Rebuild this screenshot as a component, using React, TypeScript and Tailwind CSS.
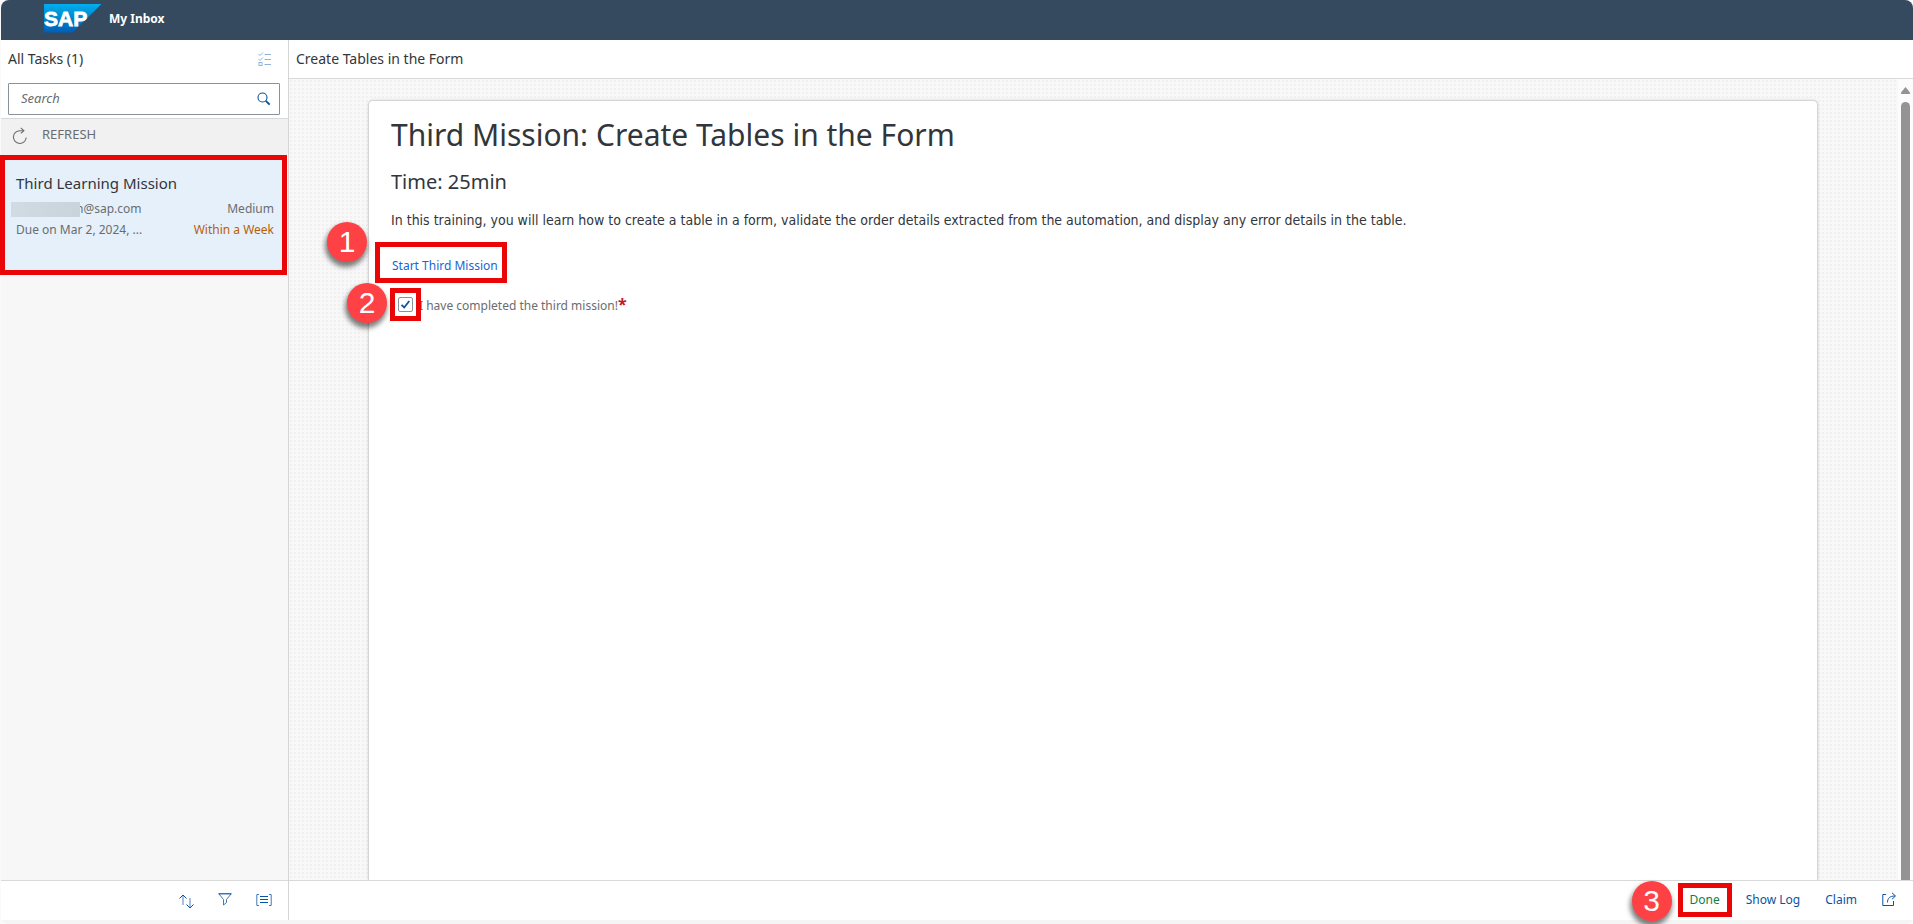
import type { ReactNode } from 'react';

function Callout({ className, children }: { className: string; children: ReactNode }) {
  return (
    <span
      aria-hidden="true"
      className={`pointer-events-none absolute z-20 flex size-10 items-center justify-center rounded-full bg-[#fd4144] font-['Liberation_Sans',sans-serif] text-[30px] leading-none text-white shadow-[-1px_4px_5px_1px_rgba(0,0,0,0.5)] ${className}`}
    >
      {children}
    </span>
  );
}

function Frame() {
  return <span className="pointer-events-none absolute inset-0 z-10 border-5 border-[#ea0606]" />;
}

function SapLogo() {
  return (
    <svg width="58" height="29" viewBox="0 0 58 29" role="img" aria-label="SAP">
      <defs>
        <linearGradient id="sap" x1="0" y1="0" x2="0" y2="1">
          <stop offset="0" stopColor="#00aeef" />
          <stop offset="0.5" stopColor="#0085ca" />
          <stop offset="1" stopColor="#005eb8" />
        </linearGradient>
      </defs>
      <path d="M0 0H57.500L28.500 28.500H0Z" fill="url(#sap)" />
      <text
        x="0"
        y="22"
        fill="#fff"
        stroke="#fff"
        strokeWidth="0.8"
        fontFamily="'Liberation Sans', sans-serif"
        fontWeight="700"
        fontSize="21"
      >
        SAP
      </text>
    </svg>
  );
}

function MultiSelectIcon() {
  return (
    <svg width="14" height="15" viewBox="0 0 14 15" fill="none" stroke="#8fb3da">
      <path d="M6.500 2.500H13M6.500 7.500H13M6.500 12.500H13M0.500 2L2 3.500L5 0.500M0.500 7L2 8.500L5 5.500" />
      <rect x="1" y="10.500" width="3" height="3" />
    </svg>
  );
}

function SearchIcon() {
  return (
    <svg width="14" height="14" viewBox="0 0 14 14" fill="none" stroke="#0854a0">
      <circle cx="5.500" cy="5.500" r="4.500" strokeWidth="1.100" />
      <path d="M8.800 8.800L12.700 12.700" strokeWidth="1.900" />
    </svg>
  );
}

function RefreshIcon() {
  return (
    <svg width="16" height="18" viewBox="0 0 16 18" fill="none" stroke="#6a6d70" strokeWidth="1.100">
      <path d="M11.800 3.700H8A6.400 6.400 0 1 0 14.200 10.500" />
      <path d="M8.800 0.800L11.900 3.700L8.800 6.400" />
    </svg>
  );
}

function SortIcon() {
  return (
    <svg width="15" height="15" viewBox="0 0 15 15" fill="none" stroke="#0854a0">
      <path d="M4 1V11M11 4V14" stroke="#6d9aca" strokeWidth="1.200" />
      <path d="M0.500 4.500L4 1L7.500 4.500M7.500 10.500L11 14L14.500 10.500" />
    </svg>
  );
}

function FilterIcon() {
  return (
    <svg width="14" height="13" viewBox="0 0 14 13" fill="none" stroke="#0854a0">
      <path d="M1 1L5.500 6.500V12L8.500 9.500V6.500L13 1" stroke="#3f79b6" />
      <path d="M0.500 0.800H13.500" strokeWidth="1.200" />
    </svg>
  );
}

function GroupIcon() {
  return (
    <svg width="16" height="12" viewBox="0 0 16 12" fill="none" stroke="#0854a0">
      <path d="M3 0.500H0.800V11.500H3M13 0.500H15.200V11.500H13" stroke="#3f79b6" />
      <path d="M4 2.500H12M4 5.500H12M4 8.500H12" strokeWidth="1.200" />
    </svg>
  );
}

function ShareIcon() {
  return (
    <svg width="15" height="15" viewBox="0 0 15 15" fill="none" stroke="#0854a0">
      <path d="M4 2.500H0.800V13.500H11.500V9" />
      <path d="M5.500 10.500C5.500 6 8 4 13 4" />
      <path d="M10 0.800L13.500 4L10 7.200" />
    </svg>
  );
}

function Sidebar() {
  return (
    <aside className="flex w-72 shrink-0 flex-col border-r border-[#d5d5d5] bg-[#f7f7f7]">
      <div className="border-b border-[#d9d9d9] bg-white pr-2 pb-[3px] pl-[7px]">
        <div className="flex h-[38px] items-center justify-between pr-2">
          <h2 className="text-[14px] leading-5 text-[#32363a]">All Tasks (1)</h2>
          <button type="button" aria-label="Select multiple tasks">
            <MultiSelectIcon />
          </button>
        </div>
        <form className="mt-[5px] flex h-8 items-center rounded-[1px] border border-[#89919a] bg-white pr-2 pl-3" onSubmit={(e) => e.preventDefault()}>
          <input
            type="search"
            aria-label="Search"
            placeholder="Search"
            className="min-w-0 flex-1 pb-0.5 text-[13px] leading-5 outline-none placeholder:text-[#6a6d70] placeholder:italic"
          />
          <button type="submit" aria-label="Run search">
            <SearchIcon />
          </button>
        </form>
      </div>
      <button type="button" className="flex h-9 items-center gap-3.5 bg-[#f1f1f1] pb-1.5 pl-[11px] text-[13px] leading-5 text-[#6a6d70]">
        <span className="pt-1"><RefreshIcon /></span>
        REFRESH
      </button>
      <a href="#task" className="relative -ml-px mr-px block h-[120px] bg-[#e5f0fa] pt-[18px] pr-[13px] pl-4 text-[12px] leading-4 text-[#6a6d70]">
        <Frame />
        <h3 className="text-[15px] leading-5 text-[#32363a]">Third Learning Mission</h3>
        <div className="mt-2 flex justify-between">
          <span className="-ml-[5px] flex items-center">
            <span className="z-1 -mr-1 h-[15px] w-[69px] bg-linear-to-r from-[#d0dbe4] to-[#c9d3dc]" />
            n@sap.com
          </span>
          <span>Medium</span>
        </div>
        <div className="mt-[5px] flex justify-between">
          <span>Due on Mar 2, 2024, ...</span>
          <span className="text-[#b95e04]">Within a Week</span>
        </div>
      </a>
      <div className="mt-auto flex h-10 items-center justify-end gap-6 border-t border-[#d9d9d9] bg-white pr-4 pb-0.5">
        <button type="button" aria-label="Sort" className="pt-1"><SortIcon /></button>
        <button type="button" aria-label="Filter"><FilterIcon /></button>
        <button type="button" aria-label="Group"><GroupIcon /></button>
      </div>
    </aside>
  );
}

function MissionForm() {
  return (
    <article className="flex-1 rounded-t-[5px] border border-b-0 border-[#d5d5d5] bg-white px-[22px] pt-3.5 text-[#32363a] shadow-[0_0_3px_rgba(0,0,0,0.12)]">
      <h1 className="text-[30px] leading-10">Third Mission: Create Tables in the Form</h1>
      <h2 className="mt-[13px] text-[20px] leading-7">Time: 25min</h2>
      <p className="mt-3.5 font-['DejaVu_Sans_Condensed','DejaVu_Sans',sans-serif] text-[14px] leading-5">
        In this training, you will learn how to create a table in a form, validate the order details extracted from the
        automation, and display any error details in the table.
      </p>
      <div className="relative mt-3 -ml-4 h-[41px] w-fit pt-4 pr-[9px] pl-[17px]">
        <Frame />
        <Callout className="-top-5 -left-12">1</Callout>
        <a href="#mission" className="block text-[12px] leading-4 text-[#1567d2]">
          Start Third Mission
        </a>
      </div>
      <div className="mt-[5px] -ml-px flex h-[33px] items-center">
        <span className="relative flex h-full w-[31px] shrink-0 items-center justify-center">
          <Frame />
          <Callout className="-top-[5px] -left-[43px]">2</Callout>
          <span className="grid">
            <input
              id="completed"
              type="checkbox"
              defaultChecked
              className="peer col-start-1 row-start-1 size-[15px] appearance-none rounded-[2px] border border-[#89919a] bg-white"
            />
            <svg
              viewBox="0 0 15 15"
              className="pointer-events-none invisible col-start-1 row-start-1 size-[15px] fill-none stroke-[#0854a0] stroke-[1.8] peer-checked:visible"
            >
              <path d="M3.500 7.800L6.200 10.500L11.300 4" />
            </svg>
          </span>
        </span>
        <label htmlFor="completed" className="-ml-0.5 text-[12px] leading-4 text-[#6a6d70]">
          I have completed the third mission!<span className="text-[16px] leading-4 font-bold text-[#c4161c]">*</span>
        </label>
      </div>
    </article>
  );
}

function Detail() {
  return (
    <main className="flex min-w-0 flex-1 flex-col">
      <div className="flex h-[39px] shrink-0 items-center border-b border-[#d9d9d9] bg-white pl-[7px] text-[14px] leading-5 text-[#32363a]">
        Create Tables in the Form
      </div>
      <div className="flex min-h-0 flex-1">
        <div className="flex min-w-0 flex-1 overflow-hidden bg-[#f8f8f8] bg-[radial-gradient(circle,#f0f0f0_1px,transparent_1px)] bg-size-[4px_4px] pt-[21px] pr-20 pl-[79px]">
          <MissionForm />
        </div>
        <div className="flex w-[15px] shrink-0 flex-col items-center bg-[#fcfcfc] pt-2">
          <svg width="9" height="7" viewBox="0 0 9 7" fill="#949494">
            <path d="M4.500 0L9 5.500V7H0V5.500Z" />
          </svg>
          <div className="mt-2 w-[9px] flex-1 rounded-t-full bg-[#949494]" />
        </div>
      </div>
      <div className="flex h-10 shrink-0 items-center justify-end border-t border-[#d9d9d9] bg-white pr-4 pb-0.5 text-[12px] leading-4 text-[#0854a0]">
        <span className="relative mr-3.5 flex h-[34px] items-center px-3">
          <Frame />
          <Callout className="-top-0.5 -left-[46px]">3</Callout>
          <button type="button" className="text-[#107e3e]">Done</button>
        </span>
        <button type="button" className="mr-[25px]">Show Log</button>
        <button type="button" className="mr-[25px]">Claim</button>
        <button type="button" aria-label="Share"><ShareIcon /></button>
      </div>
    </main>
  );
}

export default function App() {
  return (
    <div className="h-screen bg-[#fafafa] pl-px font-['Noto_Sans',sans-serif]">
      <div className="flex h-full flex-col rounded-lg bg-[#f5f5f5]">
        <header className="flex h-10 shrink-0 items-center gap-[7px] rounded-t-lg bg-[#354a5f] pl-[43px]">
          <span className="-mt-1">
            <SapLogo />
          </span>
          <h1 className="-mt-0.5 text-[12px] leading-4 font-bold text-white">My Inbox</h1>
        </header>
        <div className="flex min-h-0 flex-1 pb-1">
          <Sidebar />
          <Detail />
        </div>
      </div>
    </div>
  );
}
